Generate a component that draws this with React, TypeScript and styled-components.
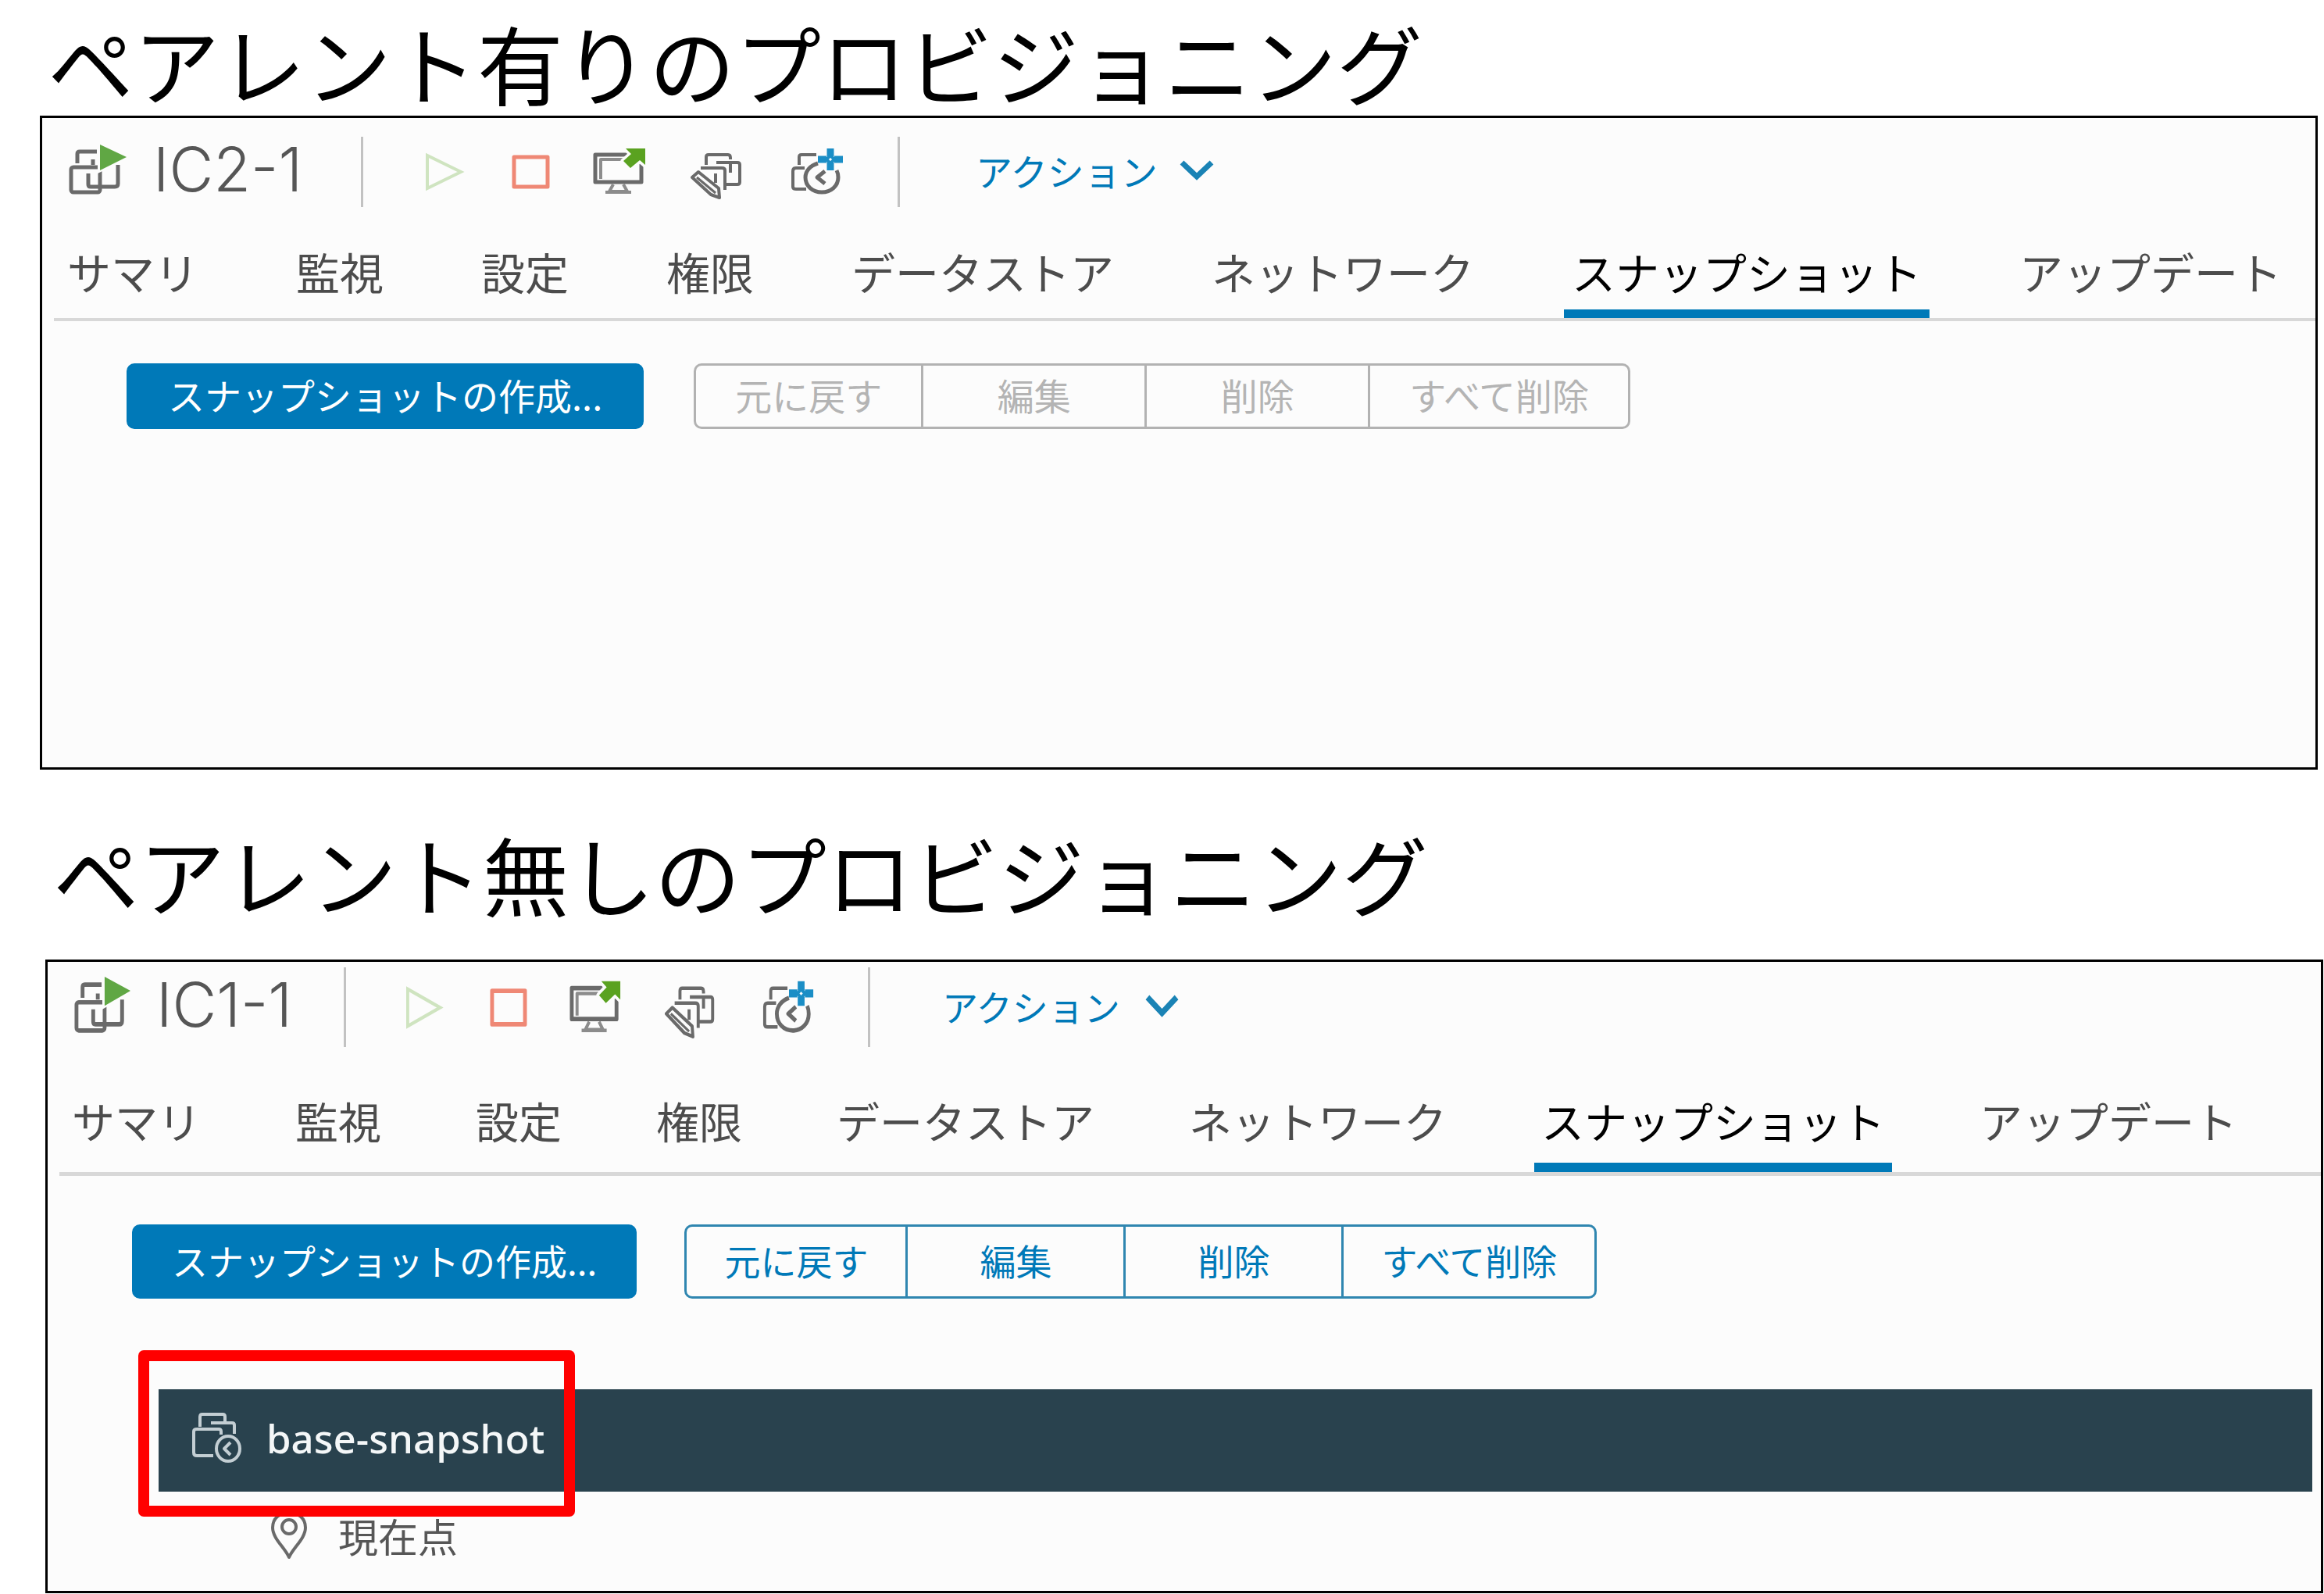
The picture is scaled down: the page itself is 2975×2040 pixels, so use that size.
import React, { ReactNode } from "react";
import styled, { createGlobalStyle, ThemeProvider, useTheme } from "styled-components";

const GlobalStyle = createGlobalStyle`
  *, *::before, *::after { box-sizing: border-box; }
  body {
    margin: 0;
    background: #ffffff;
    font-family: "Noto Sans CJK JP", sans-serif;
  }
  button { font-family: inherit; }
`;

/* Each capture is shown at its own zoom, so its measures live in a theme. */
const compact = {
  inset: 51,
  edge: 8,
  rowHeight: 90,
  toolbarTop: 24,
  toolbarBottom: 32,
  iconX: 100,
  iconY: 100,
  nameWidth: 266,
  nameGap: 34,
  toolGap: 55,
  toolStart: 80,
  actionStart: 97,
  chevronGap: 28,
  tabSize: 56,
  tabLine: 99,
  tabPad: 10,
  tabGap: 105,
  tabBar: 11,
  rule: 4,
  buttonTop: 54,
  buttonHeight: 84,
  buttonSize: 47,
  buttonPad: 50,
  buttonGap: 64,
  segment: 286,
};

const roomy: typeof compact = {
  inset: 58,
  edge: 1,
  rowHeight: 102,
  toolbarTop: 7,
  toolbarBottom: 38,
  iconX: 97,
  iconY: 113,
  nameWidth: 240,
  nameGap: 33,
  toolGap: 54,
  toolStart: 77,
  actionStart: 92,
  chevronGap: 32,
  tabSize: 55,
  tabLine: 110,
  tabPad: 9,
  tabGap: 103,
  tabBar: 12,
  rule: 5,
  buttonTop: 62,
  buttonHeight: 95,
  buttonSize: 46,
  buttonPad: 48,
  buttonGap: 61,
  segment: 279,
};

type Measures = typeof compact;
const m = (key: keyof Measures) => (p: { theme: any }) => `${p.theme[key]}px`;

const Page = styled.main`
  display: flex;
  flex-direction: column;
  gap: 63px;
  padding-top: 10px;
`;

const Section = styled.section`
  margin: 0 ${m("edge")} 0 ${m("inset")};
`;

const Heading = styled.h2<{ $space: number }>`
  margin: 0 0 ${(p) => p.$space}px;
  padding-left: 10px;
  font-size: 110px;
  font-weight: 400;
  line-height: 138px;
  color: #000000;
  white-space: nowrap;
`;

const Panel = styled.div`
  border: 3px solid #000000;
  background: #fcfcfc;
`;

const Toolbar = styled.header`
  display: flex;
  align-items: center;
  padding: ${m("toolbarTop")} 34px ${m("toolbarBottom")};
`;

const Name = styled.h3`
  min-width: ${m("nameWidth")};
  margin: 0 0 0 ${m("nameGap")};
  padding-bottom: 6px;
  font-family: Inter, "Liberation Sans", sans-serif;
  font-size: 78px;
  font-weight: 300;
  line-height: 80px;
  color: #565656;
  white-space: nowrap;
`;

const Divider = styled.span`
  flex: none;
  width: 3px;
  height: ${m("rowHeight")};
  background: #c2c2c2;
`;

const Tools = styled.div`
  display: flex;
  align-items: center;
  gap: ${m("toolGap")};
  padding: 0 66px 0 ${m("toolStart")};
`;

const ToolButton = styled.button`
  display: flex;
  padding: 0;
  border: 0;
  background: none;
  cursor: pointer;
`;

const ActionButton = styled.button`
  display: flex;
  align-items: center;
  gap: ${m("chevronGap")};
  margin-left: ${m("actionStart")};
  padding: 0 0 4px;
  border: 0;
  background: none;
  font-size: ${m("buttonSize")};
  line-height: 70px;
  color: #0079b8;
  white-space: nowrap;
  cursor: pointer;
`;

const Tabs = styled.nav`
  display: flex;
  gap: ${m("tabGap")};
  margin-left: 15px;
  padding-left: 7px;
  border-bottom: ${m("rule")} solid #d8d8d8;
`;

const Tab = styled.button<{ $active: boolean }>`
  flex: none;
  padding: 0 ${m("tabPad")};
  border: 0;
  border-bottom: ${m("tabBar")} solid ${(p) => (p.$active ? "#0079b8" : "transparent")};
  background: none;
  font-size: ${m("tabSize")};
  line-height: ${m("tabLine")};
  color: ${(p) => (p.$active ? "#000000" : "#4c4c4c")};
  white-space: nowrap;
  cursor: pointer;
`;

const Content = styled.div<{ $minHeight?: number }>`
  min-height: ${(p) => p.$minHeight ?? 0}px;
  padding: ${m("buttonTop")} 0 0 108px;
`;

const Buttons = styled.div`
  display: flex;
  gap: ${m("buttonGap")};
`;

const BaseButton = styled.button`
  height: ${m("buttonHeight")};
  padding: 0 ${m("buttonPad")} 5px;
  font-size: ${m("buttonSize")};
  line-height: 66px;
  white-space: nowrap;
  cursor: pointer;
`;

const PrimaryButton = styled(BaseButton)`
  border: 3px solid #0079b8;
  border-radius: 10px;
  background: #0079b8;
  color: #ffffff;
`;

const Group = styled.div`
  display: flex;
`;

const GroupButton = styled(BaseButton)`
  min-width: ${m("segment")};
  border: 3px solid #2f86b0;
  border-right-width: 0;
  background: #fcfcfc;
  color: #0079b8;

  &:first-child { border-radius: 10px 0 0 10px; }
  &:last-child { border-right-width: 3px; border-radius: 0 10px 10px 0; }
  &:disabled { border-color: #b2b2b2; color: #b4b4b4; cursor: default; }
`;

const Tree = styled.ul`
  position: relative;
  margin: 116px 11px 0 34px;
  padding: 0 0 15px;
  list-style: none;
`;

const SnapshotRow = styled.li`
  display: flex;
  align-items: center;
  gap: 31px;
  height: 131px;
  padding: 0 0 8px 43px;
  background: #29424e;
  font-family: "Noto Sans", sans-serif;
  font-size: 51px;
  font-weight: 500;
  color: #f4f7f8;
`;

const CurrentRow = styled.li`
  display: flex;
  align-items: center;
  gap: 40px;
  padding-left: 144px;
  font-size: 51px;
  line-height: 112px;
  color: #565656;
`;

const Callout = styled.div`
  position: absolute;
  top: -50px;
  left: -26px;
  width: 559px;
  height: 213px;
  border: 14px solid #ff0000;
  border-radius: 7px;
  pointer-events: none;
`;

function Icon({ w, h = 70, fixed, children }: { w: number; h?: number; fixed?: boolean; children: ReactNode }) {
  const t = useTheme() as Measures;
  return (
    <svg
      width={fixed ? w : Math.round((w * t.iconX) / 100)}
      height={fixed ? h : Math.round((h * t.iconY) / 100)}
      viewBox={`0 0 ${w} ${h}`}
      preserveAspectRatio="none"
      fill="none"
      stroke="#6a6a6a"
      strokeWidth="5"
      strokeLinejoin="round"
      aria-hidden="true"
    >
      {children}
    </svg>
  );
}

const VmIcon = () => (
  <Icon w={74}>
    <path d="M11 24V12Q11 9 14 9H36M31 19V26" />
    <rect x="3" y="29" width="37" height="32" rx="3" />
    <path d="M25 37V51Q25 54 28 54H59Q63 54 63 50V26" />
    <path d="M37 -5V37L80 16Z" fill="#fcfcfc" stroke="none" />
    <path d="M40 0V33L74 16Z" fill="#60a744" stroke="none" />
  </Icon>
);

const PlayIcon = () => (
  <Icon w={54}>
    <path d="M2 14V56L45 35Z" stroke="#cfe4c0" strokeWidth="4" strokeLinejoin="miter" />
  </Icon>
);

const StopIcon = () => (
  <Icon w={50}>
    <rect x="4" y="16" width="43" height="38" stroke="#ef8875" strokeWidth="5" />
  </Icon>
);

const ConsoleIcon = () => (
  <Icon w={70}>
    <path d="M10 44V19H42" stroke="#8c8c8c" strokeWidth="4" />
    <path d="M62 23V48H3V13H44" />
    <path d="M26 51L21 60H44L39 51" stroke="#8c8c8c" strokeWidth="4" />
    <path d="M16 61H49" stroke="#8c8c8c" strokeWidth="4" />
    <path d="M42 5H67V26L60 20L48 30L39 21L49 12Z" fill="#5aa220" stroke="#fcfcfc" strokeWidth="7" />
    <path d="M42 5H67V26L60 20L48 30L39 21L49 12Z" fill="#5aa220" stroke="none" />
  </Icon>
);

const EditIcon = () => (
  <Icon w={72}>
    <g strokeWidth="4">
      <path d="M20 26V16Q20 13 23 13H48Q51 13 51 17V19" />
      <path d="M33 23H60Q63 23 63 26V48Q63 51 60 51H45M51 23V36" />
      <path d="M13 30H40Q44 30 44 33V58M32 37V49" />
      <path d="M2 42L10 35L36 56L37 68L26 64Z" fill="#fcfcfc" />
      <path d="M8 42L32 62" strokeWidth="3" />
    </g>
  </Icon>
);

const SnapshotIcon = () => (
  <Icon w={72}>
    <path d="M12 26V16Q12 13 15 13H34" strokeWidth="4" />
    <path d="M19 30H8Q4 30 4 34V54Q4 57 8 57H21" strokeWidth="4" />
    <path d="M36 24C26 27 20 34 20 42C20 53 29 61 41 61C53 61 62 53 62 42C62 38 61 35 60 33" />
    <path d="M45 34L35 42L45 50" />
    <path d="M52 5V15M52 23V33M36 19H47M57 19H68" stroke="#1b8ec6" strokeWidth="9" />
    <path d="M52 14L57 19L52 24L47 19Z" stroke="#1b8ec6" strokeWidth="4" fill="#fcfcfc" />
  </Icon>
);

const ChevronIcon = () => (
  <Icon w={44} h={26}>
    <path d="M3 3L22 21L41 3" stroke="#1a83b5" strokeWidth="7" strokeLinejoin="miter" />
  </Icon>
);

const SnapshotRowIcon = () => (
  <Icon w={64} h={64} fixed>
    <g stroke="#c3ced3" strokeWidth="4">
      <path d="M10 18V5Q10 2 13 2H39Q42 2 42 5V12" />
      <path d="M24 13H51Q54 13 54 16V27" />
      <path d="M37 28V24Q37 21 34 21H6Q2 21 2 24V51Q2 55 6 55H27" />
      <ellipse cx="46" cy="46" rx="15" ry="16" />
      <path d="M49 38L41 46L49 54" />
    </g>
  </Icon>
);

const PinIcon = () => (
  <Icon w={46} h={62} fixed>
    <path d="M23 59C18 47 2 35 2 21C2 9 11 2 23 2C35 2 44 9 44 21C44 35 28 47 23 59Z" strokeWidth="4" />
    <circle cx="23" cy="20" r="9" strokeWidth="4" />
  </Icon>
);

const tabs = ["サマリ", "監視", "設定", "権限", "データストア", "ネットワーク", "スナップショット", "アップデート"];
const operations = ["元に戻す", "編集", "削除", "すべて削除"];
const tools = [
  { label: "パワーオン", icon: <PlayIcon /> },
  { label: "パワーオフ", icon: <StopIcon /> },
  { label: "コンソールの起動", icon: <ConsoleIcon /> },
  { label: "設定の編集", icon: <EditIcon /> },
  { label: "スナップショットの作成", icon: <SnapshotIcon /> },
];

function VmPanel({ name, locked, minHeight, children }: { name: string; locked?: boolean; minHeight?: number; children?: ReactNode }) {
  return (
    <Panel>
      <Toolbar>
        <VmIcon />
        <Name>{name}</Name>
        <Divider />
        <Tools>
          {tools.map((tool) => (
            <ToolButton key={tool.label} type="button" aria-label={tool.label}>
              {tool.icon}
            </ToolButton>
          ))}
        </Tools>
        <Divider />
        <ActionButton type="button">
          アクション
          <ChevronIcon />
        </ActionButton>
      </Toolbar>
      <Tabs>
        {tabs.map((tab) => (
          <Tab key={tab} type="button" $active={tab === "スナップショット"}>
            {tab}
          </Tab>
        ))}
      </Tabs>
      <Content $minHeight={minHeight}>
        <Buttons>
          <PrimaryButton type="button">スナップショットの作成...</PrimaryButton>
          <Group>
            {operations.map((label) => (
              <GroupButton key={label} type="button" disabled={locked}>
                {label}
              </GroupButton>
            ))}
          </Group>
        </Buttons>
        {children}
      </Content>
    </Panel>
  );
}

export default function App() {
  return (
    <Page>
      <GlobalStyle />
      <ThemeProvider theme={compact}>
        <Section>
          <Heading $space={0}>ペアレント有りのプロビジョニング</Heading>
          <VmPanel name="IC2-1" locked minHeight={571} />
        </Section>
      </ThemeProvider>
      <ThemeProvider theme={roomy}>
        <Section>
          <Heading $space={42}>ペアレント無しのプロビジョニング</Heading>
          <VmPanel name="IC1-1">
            <Tree>
              <SnapshotRow>
                <SnapshotRowIcon />
                base-snapshot
              </SnapshotRow>
              <CurrentRow>
                <PinIcon />
                現在点
              </CurrentRow>
              <Callout />
            </Tree>
          </VmPanel>
        </Section>
      </ThemeProvider>
    </Page>
  );
}
